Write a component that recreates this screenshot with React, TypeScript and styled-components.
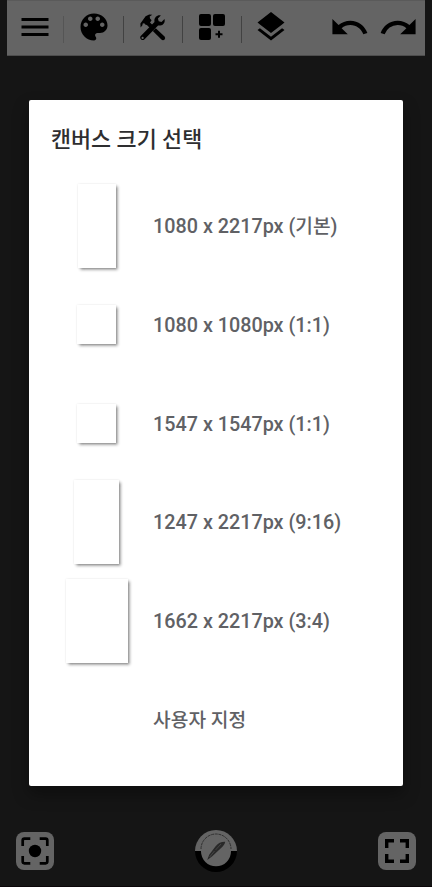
import React from "react";
import styled, { createGlobalStyle } from "styled-components";
import { MdMenu, MdLayers, MdUndo, MdRedo } from "react-icons/md";

const GlobalStyle = createGlobalStyle`
  * { box-sizing: border-box; }
  body { margin: 0; background: #151515; }
  #root { height: 100vh; }
`;

const Screen = styled.div`
  width: 432px;
  height: 887px;
  display: flex;
  flex-direction: column;
  align-items: center;
  overflow: hidden;
  background: #151515;
  border-bottom: 1px solid #0b0609;
  font-family: Roboto, "Noto Sans CJK KR", sans-serif;
`;

const Toolbar = styled.header`
  flex: none;
  width: 418px;
  height: 55.5px;
  display: flex;
  align-items: flex-start;
  background: #646464;
  border-top: 1px solid #5a5a5a;
  border-bottom: 1px solid #4d4d4d;
  color: #000;
`;

const ToolButton = styled.button<{ $width: number }>`
  width: ${(p) => p.$width}px;
  height: 52px;
  padding: 0;
  border: 0;
  background: none;
  color: inherit;
  display: flex;
  align-items: center;
  justify-content: center;
  svg { flex: none; display: block; }
`;

const Divider = styled.span<{ $faint?: boolean }>`
  width: 1px;
  height: 27px;
  margin-top: 15px;
  margin-left: ${(p) => (p.$faint ? 1 : 0)}px;
  background: ${(p) => (p.$faint ? "#555" : "#424242")};
`;

const HistoryGroup = styled.div`
  display: flex;
  margin-left: auto;
  margin-right: 2px;
`;

const Dialog = styled.section`
  flex: none;
  width: 374px;
  height: 686px;
  margin-top: 44.5px;
  padding-top: 25px;
  background: #fff;
  border-radius: 2px;
  box-shadow: 0 8px 16px rgba(0, 0, 0, 0.35);
`;

const Title = styled.h1`
  margin: 0 0 0 22px;
  height: 52px;
  line-height: 29px;
  font-size: 21.8px;
  font-weight: 500;
  color: #2e2e30;
  white-space: nowrap;
`;

const Options = styled.ul`
  list-style: none;
  margin: 0;
  padding: 0;
`;

const Option = styled.li`
  height: 98.8px;
  display: grid;
  grid-template-columns: 92px 1fr;
  align-items: center;
  padding-left: 21.5px;
  column-gap: 10.6px;
`;

const Preview = styled.div<{ $w: number; $h: number }>`
  justify-self: center;
  width: ${(p) => p.$w}px;
  height: ${(p) => p.$h}px;
  margin-bottom: 1.5px;
  background: #fff;
  box-shadow: 1.5px 1.5px 3px rgba(0, 0, 0, 0.48), 0 0 2px rgba(0, 0, 0, 0.1);
`;

const Label = styled.span`
  grid-column: 2;
  padding-top: 1.2px;
  font-size: 19.75px;
  line-height: 28px;
  font-weight: 500;
  color: #606165;
  white-space: nowrap;
`;

const Korean = styled.span`
  font-size: 19.2px;
`;

const BottomBar = styled.footer`
  width: 400px;
  margin-top: 43px;
  height: 44px;
  display: flex;
  justify-content: space-between;
  align-items: center;
`;

const RoundedButton = styled.button`
  width: 38px;
  height: 38px;
  padding: 0;
  border: 0;
  border-radius: 8px;
  background: #646464;
  svg { display: block; }
`;

const BrushButton = styled.button`
  width: 42px;
  height: 42px;
  padding: 0;
  border: 0;
  background: none;
  svg { display: block; }
`;

const PaletteIcon = () => (
  <svg width="36" height="36" viewBox="0 0 24 24">
    <path d="M12 3c-4.97 0-9 4.03-9 9s4.03 9 9 9c.83 0 1.5-.67 1.5-1.5 0-.39-.15-.74-.39-1.01-.23-.26-.38-.61-.38-.99 0-.83.67-1.5 1.5-1.5H16c2.76 0 5-2.24 5-5 0-4.42-4.03-8-9-8zm-5.5 9c-.83 0-1.5-.67-1.5-1.5S5.67 9 6.5 9 8 9.67 8 10.5 7.33 12 6.5 12zm3-4C8.67 8 8 7.33 8 6.5S8.67 5 9.5 5s1.5.67 1.5 1.5S10.33 8 9.5 8zm5 0c-.83 0-1.5-.67-1.5-1.5S13.67 5 14.5 5s1.5.67 1.5 1.5S15.33 8 14.5 8zm3 4c-.83 0-1.5-.67-1.5-1.5S16.67 9 17.5 9s1.5.67 1.5 1.5-.67 1.5-1.5 1.5z" />
  </svg>
);

const ToolsIcon = () => (
  <svg width="26" height="27" viewBox="0 0 26 27">
    <path d="M0.6 13.4 L0.4 9.5 L2.4 6.7 L5.6 2.3 L9.2 0.4 L12.3 0.7 L9.7 2.5 L10 4.6 L11.6 6.2 L10 8.5 L12.5 11.1 L9.7 13.7 L6.9 10.9 L5.6 10.8 L4.2 9.3 L2.7 9.6 L2.4 11.3 Z" />
    <path d="M15.8 14.2 L24.5 22.5 Q25.8 24 24.6 25.6 Q23 27 21.4 25.6 L12.8 17 Z" />
    <path
      fillRule="evenodd"
      d="M20.8 1.5 L17.9 4.4 L18.7 7.3 L21.5 8.1 L24.5 5.1 C25.6 9.3 22.1 12.2 18.1 11.5 L4.3 25.5 C2.5 27.2 -0.9 25 0.5 22.2 L14.5 8.1 C13.7 4 16.9 0.6 20.8 1.5 Z M2.6 22.8 A1.1 1.1 0 1 0 2.6 25 A1.1 1.1 0 1 0 2.6 22.8 Z"
    />
  </svg>
);

const WidgetsIcon = () => (
  <svg width="26" height="26" viewBox="0 0 26 26">
    <rect width="12" height="12" rx="2" />
    <rect x="14" width="12" height="12" rx="2" />
    <rect y="14" width="12" height="12" rx="2" />
    <path d="M20 16.8v7M16.5 20.3h7" stroke="#000" strokeWidth="2" />
  </svg>
);

const FocusIcon = () => (
  <svg width="38" height="38" viewBox="0 0 38 38">
    <path
      d="M14.3 6.7H8.4Q6.7 6.7 6.7 8.4V14M23.7 6.7H29.6Q31.3 6.7 31.3 8.4V14M6.7 24V29.6Q6.7 31.3 8.4 31.3H14.3M31.3 24V29.6Q31.3 31.3 29.6 31.3H23.7"
      fill="none"
      stroke="#000"
      strokeWidth="2.7"
    />
    <circle cx="19" cy="19" r="6.2" />
  </svg>
);

const FullscreenIcon = () => (
  <svg width="38" height="38" viewBox="0 0 38 38">
    <path
      d="M16 8.7H8.7V16M22 8.7H29.3V16M8.7 22V29.3H16M29.3 22V29.3H22"
      fill="none"
      stroke="#000"
      strokeWidth="3.4"
    />
  </svg>
);

const BrushIcon = () => (
  <svg width="42" height="42" viewBox="0 0 42 42">
    <path d="M0 21A21 21 0 0 1 42 21Z" fill="#646464" />
    <path d="M0 21A21 21 0 0 0 42 21Z" fill="#000" />
    <circle cx="21" cy="21.3" r="15" fill="#646464" />
    <path d="M6 19A15 15 0 0 1 36 19" fill="none" stroke="#303030" strokeWidth="1" strokeDasharray="3 .7" />
    <path d="M12.2 30L14.2 24.8L20.6 16.2Q24.5 11.6 30.2 11.8Q29.8 15.2 25.6 18.4L17 26.4Z" fill="#292929" />
    <path d="M14.6 27L19.5 21M20.5 20L26 14" stroke="#4b4b4b" strokeWidth=".8" />
  </svg>
);

const options = [
  { size: "1080 x 2217px", note: "기본", w: 38, h: 84 },
  { size: "1080 x 1080px", ratio: "1:1", w: 39, h: 39 },
  { size: "1547 x 1547px", ratio: "1:1", w: 39, h: 39 },
  { size: "1247 x 2217px", ratio: "9:16", w: 45, h: 84 },
  { size: "1662 x 2217px", ratio: "3:4", w: 62, h: 84 },
];

export default function App() {
  return (
    <>
      <GlobalStyle />
      <Screen>
        <Toolbar>
          <ToolButton $width={55}><MdMenu size={36} /></ToolButton>
          <Divider $faint />
          <ToolButton $width={59}><PaletteIcon /></ToolButton>
          <Divider />
          <ToolButton $width={58}><ToolsIcon /></ToolButton>
          <Divider />
          <ToolButton $width={58}><WidgetsIcon /></ToolButton>
          <Divider />
          <ToolButton $width={58}><MdLayers size={36} /></ToolButton>
          <HistoryGroup>
            <ToolButton $width={49}><MdUndo size={41} /></ToolButton>
            <ToolButton $width={49}><MdRedo size={41} /></ToolButton>
          </HistoryGroup>
        </Toolbar>
        <Dialog role="dialog" aria-labelledby="size-title">
          <Title id="size-title">캔버스 크기 선택</Title>
          <Options>
            {options.map((o) => (
              <Option key={o.size + (o.note ?? o.ratio)}>
                <Preview $w={o.w} $h={o.h} />
                <Label>
                  {o.size} ({o.note ? <Korean>{o.note}</Korean> : o.ratio})
                </Label>
              </Option>
            ))}
            <Option>
              <Label><Korean>사용자 지정</Korean></Label>
            </Option>
          </Options>
        </Dialog>
        <BottomBar>
          <RoundedButton><FocusIcon /></RoundedButton>
          <BrushButton><BrushIcon /></BrushButton>
          <RoundedButton><FullscreenIcon /></RoundedButton>
        </BottomBar>
      </Screen>
    </>
  );
}
